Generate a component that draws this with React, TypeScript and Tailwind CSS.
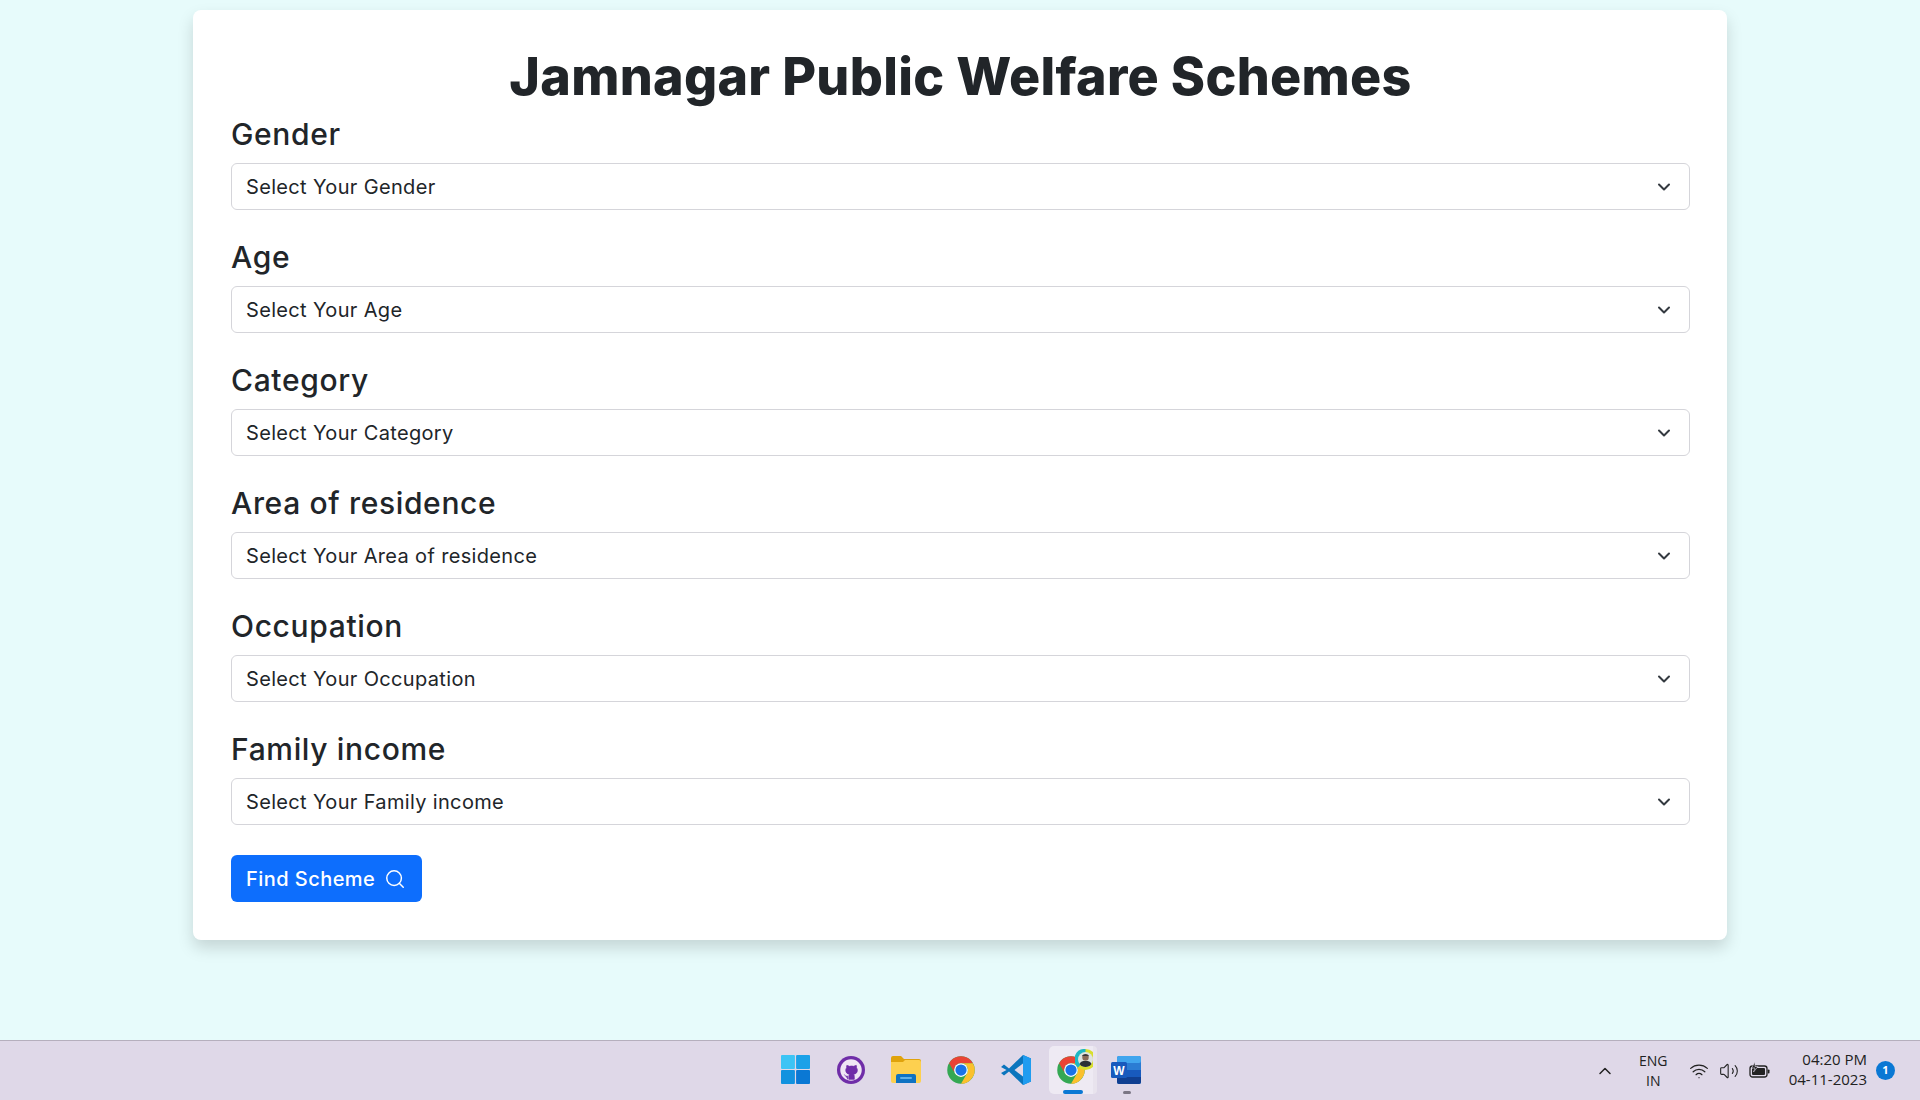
import React from 'react';
import { ChevronDown, ChevronUp, Search, Wifi, Volume2 } from 'lucide-react';

const fields = [
  { label: 'Gender', placeholder: 'Select Your Gender' },
  { label: 'Age', placeholder: 'Select Your Age' },
  { label: 'Category', placeholder: 'Select Your Category' },
  { label: 'Area of residence', placeholder: 'Select Your Area of residence' },
  { label: 'Occupation', placeholder: 'Select Your Occupation' },
  { label: 'Family income', placeholder: 'Select Your Family income' },
];

const WindowsLogo = () => (
  <svg width="29" height="29" viewBox="0 0 30 30">
    <rect x="0" y="0" width="14.4" height="14.4" rx="1" fill="#3cc4f5" />
    <rect x="15.6" y="0" width="14.4" height="14.4" rx="1" fill="#1ba1e8" />
    <rect x="0" y="15.6" width="14.4" height="14.4" rx="1" fill="#1292df" />
    <rect x="15.6" y="15.6" width="14.4" height="14.4" rx="1" fill="#0a78d4" />
  </svg>
);

const GithubLogo = () => (
  <svg width="28" height="28" viewBox="0 0 30 30">
    <circle cx="15" cy="15" r="15" fill="#6f2da8" />
    <circle cx="15" cy="15" r="11.500" fill="#efe6f4" />
    <path
      d="M11.500 25v-3.400c-2.400.5-3.200-.9-3.600-1.800M18.500 25v-3.200c0-1-.3-1.700-.9-2.200 2.400-.3 4.200-1.500 4.200-4.400 0-1-.4-1.900-1-2.600.2-.7.2-1.600-.1-2.500-1 0-1.900.5-2.600 1-1.700-.4-3.300-.4-5 0-.7-.5-1.600-1-2.600-1-.3.9-.3 1.800-.1 2.500-.6.7-1 1.600-1 2.600 0 2.900 1.800 4.100 4.200 4.400-.6.5-.9 1.200-.9 2.200V25z"
      fill="#6f2da8"
      stroke="#6f2da8"
      strokeWidth="0.8"
    />
  </svg>
);

const FolderLogo = () => (
  <svg width="30" height="27" viewBox="0 0 30 27">
    <path d="M0 2a2 2 0 0 1 2-2h8l3 3h15a2 2 0 0 1 2 2v5H0z" fill="#e0a30c" />
    <path d="M0 6h12l2-2h14a2 2 0 0 1 2 2v19a2 2 0 0 1-2 2H2a2 2 0 0 1-2-2z" fill="#fdd04f" />
    <path d="M5 27v-7a2 2 0 0 1 2-2h16a2 2 0 0 1 2 2v7z" fill="#0f72c2" />
    <rect x="9" y="21" width="12" height="2" rx="1" fill="#5fb0e8" />
  </svg>
);

const ChromeLogo = () => (
  <svg width="30" height="30" viewBox="0 0 48 48">
    <circle cx="24" cy="24" r="22" fill="#34a853" />
    <path d="M4.950 13A22 22 0 0 1 43.050 13H24A11 11 0 0 0 14.470 29.500z" fill="#ea4335" />
    <path d="M43.050 13A22 22 0 0 1 24 46L33.530 29.500A11 11 0 0 0 24 13z" fill="#fbc02d" />
    <circle cx="24" cy="24" r="11" fill="#fff" />
    <circle cx="24" cy="24" r="9" fill="#1a73e8" />
  </svg>
);

const VscodeLogo = () => (
  <svg width="30" height="30" viewBox="0 0 30 30">
    <path d="M22 0 30 3.500v23L22 30 8 16.500 3 20.500 0 18l5.500-3L0 12l3-2.500 5 4L22 0z" fill="#0a75bd" />
    <path d="M22 0 30 3.500v23L22 30z" fill="#1f9cf0" />
    <path d="M22 8.500v13L13.500 15z" fill="#dfd8e8" />
  </svg>
);

const WordLogo = () => (
  <svg width="30" height="30" viewBox="0 0 30 30">
    <rect x="6" y="1" width="24" height="28" rx="2" fill="#2b7cd3" />
    <rect x="6" y="1" width="24" height="7" rx="2" fill="#41a5ee" />
    <rect x="6" y="15" width="24" height="7" fill="#185abd" />
    <path d="M6 22h24v5a2 2 0 0 1-2 2H8a2 2 0 0 1-2-2z" fill="#103f91" />
    <rect x="0" y="7" width="16" height="16" rx="1.500" fill="#185abd" />
    <text x="8" y="19.500" textAnchor="middle" fontSize="12" fontWeight="700" fill="#fff" fontFamily="Liberation Sans, sans-serif">W</text>
  </svg>
);

const ProfileBadge = () => (
  <svg width="21" height="21" viewBox="0 0 21 21">
    <circle cx="10.500" cy="10.500" r="10.500" fill="#d9df2e" />
    <path d="M10.500 0A10.500 10.500 0 0 0 3 18.500L10.500 10.500z" fill="#1fb7c4" />
    <circle cx="10.500" cy="10.500" r="7.500" fill="#dfe3df" />
    <path d="M4.500 15c1-2.500 3-3 6-3s5 .5 6 3a7.500 7.500 0 0 1-12 0z" fill="#2b2f36" />
    <circle cx="10.500" cy="8.500" r="3.200" fill="#8a6a58" />
    <path d="M7 7.500C7 4.500 14 4.500 14 7.500l-1-.8H8z" fill="#22252b" />
  </svg>
);

const Battery = () => (
  <svg width="21" height="17" viewBox="0 0 21 17" fill="none">
    <rect x="1" y="4" width="17" height="11" rx="2.500" stroke="#222" strokeWidth="1.300" />
    <rect x="3" y="6" width="13" height="7" rx="1" fill="#222" />
    <rect x="18.800" y="7.500" width="1.700" height="4" rx="0.800" fill="#222" />
    <path d="M6 0 2.500 6H6L4.500 10 9 4.500H6z" fill="#222" stroke="#dfd8e8" strokeWidth="0.600" />
  </svg>
);

export default function App() {
  return (
    <div className="flex h-[1100px] flex-col bg-[#e7fbfb] font-['Inter',sans-serif] text-[#212529]">
      <main className="flex-1 px-[193px] pt-[10px]">
        <div className="h-[930px] rounded-[8px] bg-white pt-[20px] pr-[37px] pl-[38px] shadow-[0_8px_16px_rgba(0,0,0,0.15)]">
          <h1 className="h-[82px] text-center text-[52px] leading-[94px] font-extrabold tracking-[0.3px]">
            Jamnagar Public Welfare Schemes
          </h1>
          <form className="flex flex-col">
            {fields.map((field) => (
              <div key={field.label} className="mb-[25px] flex flex-col">
                <label className="h-[51px] text-[30px] leading-[45px] font-medium tracking-[0.65px]">{field.label}</label>
                <div className="flex h-[47px] items-center justify-between rounded-[6px] border border-[#d5d5da] bg-white pr-[15px] pl-[14px] text-[20px] tracking-[0.34px]">
                  <span>{field.placeholder}</span>
                  <ChevronDown size={20} strokeWidth={2.4} className="text-[#343a40]" />
                </div>
              </div>
            ))}
            <button
              type="button"
              className="mt-[5px] flex h-[47px] w-[191px] items-center gap-[9px] rounded-[6px] bg-[#0d6efd] pl-[15px] text-[20px] font-medium tracking-[0.45px] text-white"
            >
              Find Scheme
              <Search size={22} strokeWidth={1.6} />
            </button>
          </form>
        </div>
      </main>

      <footer className="relative flex h-[60px] items-center justify-center border-t border-[#b5afbd] bg-[#dfd8e8] pb-[2px] font-['Open_Sans',sans-serif] text-[#222]">
        <div className="flex items-center">
          <div className="flex w-[57px] justify-center"><WindowsLogo /></div>
          <div className="flex w-[55px] justify-center"><GithubLogo /></div>
          <div className="flex w-[55px] justify-center"><FolderLogo /></div>
          <div className="flex w-[55px] justify-center"><ChromeLogo /></div>
          <div className="flex w-[55px] justify-center"><VscodeLogo /></div>
          <div className="flex w-[55px] justify-center">
            <div className="relative flex h-[48px] w-[44px] items-center justify-center rounded-l-[5px] bg-[#eeeaf3]">
              <ChromeLogo />
              <span className="absolute top-[3px] -right-[3px]"><ProfileBadge /></span>
              <span className="absolute bottom-0 left-[14px] h-[4px] w-[20px] rounded-full bg-[#0a78d4]" />
              <span className="absolute top-0 -right-[4px] h-full w-[4px] rounded-r-[5px] bg-[#e8e3ed]" />
            </div>
          </div>
          <div className="relative flex h-[48px] w-[55px] items-center justify-center">
            <WordLogo />
            <span className="absolute bottom-0 left-[24px] h-[3px] w-[8px] rounded-full bg-[#7b7684]" />
          </div>
        </div>

        <div className="absolute top-0 right-[25px] flex h-full items-center">
          <ChevronUp size={20} strokeWidth={1.8} className="mr-[24px]" />
          <div className="mr-[21px] w-[29px] text-center text-[14px] leading-[20px] whitespace-nowrap">
            <div>ENG</div>
            <div>IN</div>
          </div>
          <Wifi size={20} strokeWidth={1.5} className="mr-[10px]" />
          <Volume2 size={20} strokeWidth={1.3} className="mr-[10px]" />
          <Battery />
          <div className="mr-[9px] mb-[3px] ml-[19px] text-right text-[15px] leading-[20px]">
            <div>04:20 PM</div>
            <div>04-11-2023</div>
          </div>
          <span className="flex h-[19px] w-[19px] items-center justify-center rounded-full bg-[#0a78d4] text-[11px] font-bold text-white">
            1
          </span>
        </div>
      </footer>
    </div>
  );
}
